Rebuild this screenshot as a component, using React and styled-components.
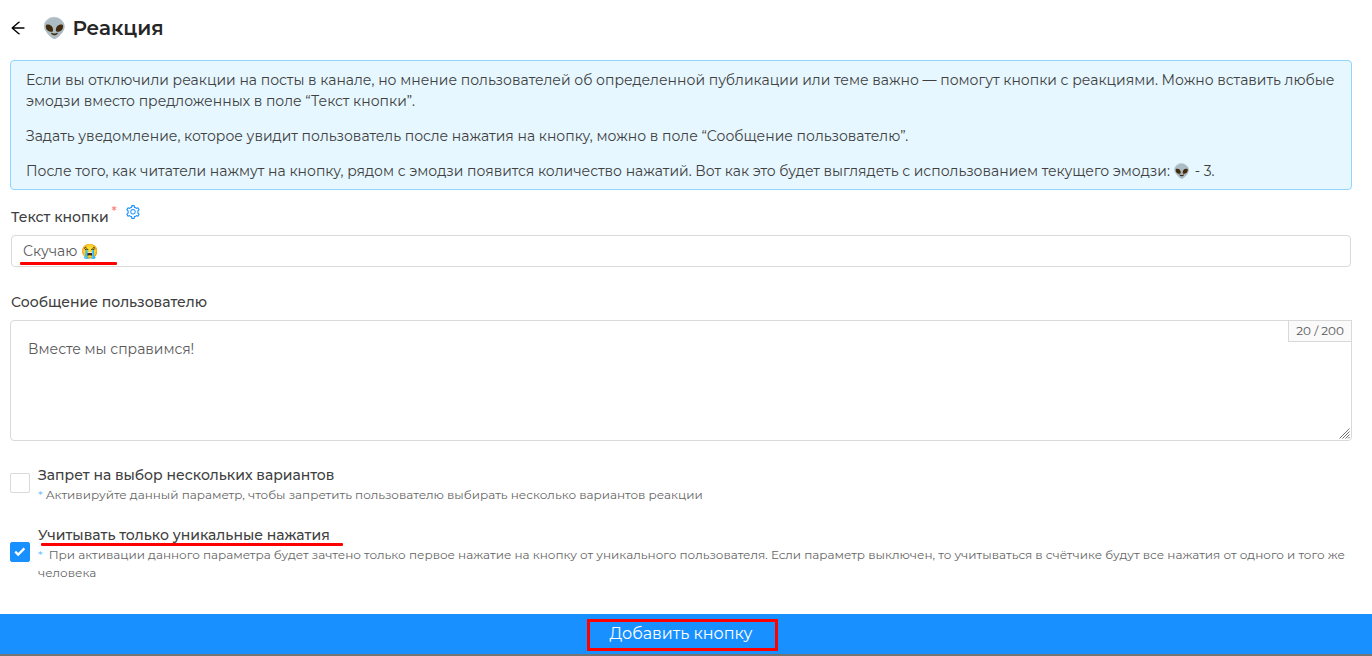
import React, { useState } from "react";
import styled, { createGlobalStyle } from "styled-components";
import { AiOutlineArrowLeft, AiOutlineSetting } from "react-icons/ai";

const GlobalStyle = createGlobalStyle`
  *, *::before, *::after { box-sizing: border-box; }
  body {
    margin: 0;
    background: #fff;
    color: #404040;
    font-family: Montserrat, Inter, "Noto Color Emoji", sans-serif;
    font-size: 14px;
    line-height: 21px;
  }
`;

const Page = styled.form`
  display: flex;
  flex-direction: column;
  min-height: 100vh;
`;

const Content = styled.main`
  flex: 1;
  padding: 14px 20px 0 10px;
`;

const Header = styled.header`
  display: flex;
  align-items: center;
  gap: 15px;
  height: 28px;
  margin-left: -1px;
`;

const IconButton = styled.button`
  display: flex;
  align-self: ${(p) => p.$align};
  padding: 0;
  border: 0;
  background: none;
  color: ${(p) => p.$color};
  font-size: ${(p) => p.$size};
  cursor: pointer;
`;

const Title = styled.h1`
  margin: 0;
  color: #262626;
  font-size: 20px;
  font-weight: 600;
  line-height: 28px;
`;

const Notice = styled.section`
  display: flex;
  flex-direction: column;
  gap: 14px;
  margin-top: 18px;
  padding: 9px 15px 7px;
  border: 1px solid #91d5ff;
  border-radius: 4px;
  background: #e6f7ff;
`;

const Paragraph = styled.p`
  margin: 0;
`;

const LabelRow = styled.div`
  display: flex;
  align-items: flex-end;
  gap: 9px;
  height: 24px;
  margin: ${(p) => p.$top} 0 7px;
  padding-left: 1px;
`;

const Label = styled.label`
  font-weight: 500;
`;

const Required = styled.sup`
  margin-left: 3px;
  color: #ff7875;
  font-size: 12px;
  line-height: 0;
`;

const Field = styled.div`
  position: relative;
  margin: 0 ${(p) => p.$inset};
`;

const TextInput = styled.input`
  display: block;
  width: 100%;
  height: 32px;
  padding: 4px 11px;
  border: 1px solid #d9d9d9;
  border-radius: 4px;
  color: #595959;
  font: inherit;
`;

const TextArea = styled.textarea`
  display: block;
  width: 100%;
  height: 121px;
  padding: 18px 17px;
  border: 1px solid #d9d9d9;
  border-radius: 4px;
  color: #595959;
  font: inherit;
  resize: vertical;

  &::-webkit-resizer { background: transparent; }
`;

const Grip = styled.svg`
  position: absolute;
  right: 2px;
  bottom: 2px;
  pointer-events: none;
`;

const Counter = styled.span`
  position: absolute;
  top: 0;
  right: 0;
  padding: 0 7px;
  border: 1px solid #d9d9d9;
  background: #fafafa;
  color: #595959;
  font-size: 12px;
  line-height: 20px;
`;

const Options = styled.div`
  display: flex;
  flex-direction: column;
  gap: 21px;
  margin-top: 24px;
`;

const Option = styled.div`
  display: flex;
  align-items: center;
  gap: 8px;
`;

const CheckWrap = styled.span`
  display: grid;
  flex: none;
  width: 20px;
  height: 20px;
  margin-bottom: 3px;

  > * { grid-area: 1 / 1; }
  svg { place-self: center; pointer-events: none; }
`;

const CheckBox = styled.input`
  appearance: none;
  width: 20px;
  height: 20px;
  margin: 0;
  border: 1px solid #d9d9d9;
  border-radius: 2px;
  background: #fff;

  &:checked {
    border-color: #1890ff;
    background: #1890ff;
  }
`;

const Hint = styled.p`
  margin: 0;
  color: #666;
  font-size: 12px;
  line-height: 18px;
`;

const HintStar = styled.span`
  margin-right: ${(p) => p.$gap};
  color: #69c0ff;
`;

const Submit = styled.button`
  height: 40px;
  padding: 0 10px 2px 0;
  border: 0;
  background: #1890ff;
  color: #fff;
  font: inherit;
  font-size: 16px;
  cursor: pointer;
`;

const BottomEdge = styled.div`
  height: 2px;
  background: #757575;
`;

const Marked = styled.span`
  position: relative;
`;

const Underline = styled.span`
  position: absolute;
  left: ${(p) => p.$left};
  bottom: ${(p) => p.$bottom};
  width: ${(p) => p.$width};
  height: 3px;
  border-radius: 1px;
  background: #f00;
  pointer-events: none;
`;

const Frame = styled.span`
  position: absolute;
  inset: -5px -26px -8px -23px;
  border: 3px solid #f00;
  pointer-events: none;
`;

function Toggle({ id, title, gap, hint, defaultChecked, mark }) {
  const [on, setOn] = useState(defaultChecked);
  return (
    <Option>
      <CheckWrap>
        <CheckBox
          id={id}
          type="checkbox"
          checked={on}
          aria-describedby={id + "-hint"}
          onChange={(e) => setOn(e.target.checked)}
        />
        {on && (
          <svg width="12" height="10" viewBox="0 0 12 10" fill="none" stroke="#fff" strokeWidth="2.2">
            <path d="M1.2 4.6 4.2 7.6 10.4 1.4" />
          </svg>
        )}
      </CheckWrap>
      <div>
        <Marked>
          <Label htmlFor={id}>{title}</Label>
          {mark}
        </Marked>
        <Hint id={id + "-hint"}>
          <HintStar $gap={gap}>*</HintStar>
          {hint}
        </Hint>
      </div>
    </Option>
  );
}

export default function App() {
  const [text, setText] = useState("Скучаю 😭");
  const [message, setMessage] = useState("Вместе мы справимся!");
  return (
    <>
      <GlobalStyle />
      <Page onSubmit={(e) => e.preventDefault()}>
        <Content>
          <Header>
            <IconButton type="button" aria-label="Назад" $align="center" $color="#000" $size="18px">
              <AiOutlineArrowLeft />
            </IconButton>
            <Title>👽 Реакция</Title>
          </Header>
          <Notice>
            <Paragraph>
              Если вы отключили реакции на посты в канале, но мнение пользователей об определенной
              публикации или теме важно — помогут кнопки с реакциями. Можно вставить любые эмодзи
              вместо предложенных в поле “Текст кнопки”.
            </Paragraph>
            <Paragraph>
              Задать уведомление, которое увидит пользователь после нажатия на кнопку, можно в поле
              “Сообщение пользователю”.
            </Paragraph>
            <Paragraph>
              После того, как читатели нажмут на кнопку, рядом с эмодзи появится количество нажатий.
              Вот как это будет выглядеть с использованием текущего эмодзи: 👽 - 3.
            </Paragraph>
          </Notice>
          <LabelRow $top="14px">
            <Label htmlFor="button-text">
              Текст кнопки<Required>*</Required>
            </Label>
            <IconButton type="button" aria-label="Настройки" $align="flex-start" $color="#1890ff" $size="16px">
              <AiOutlineSetting />
            </IconButton>
          </LabelRow>
          <Field $inset="1px">
            <TextInput id="button-text" value={text} onChange={(e) => setText(e.target.value)} />
            <Underline $left="9px" $bottom="2px" $width="97px" />
          </Field>
          <LabelRow $top="22px">
            <Label htmlFor="user-message">Сообщение пользователю</Label>
          </LabelRow>
          <Field $inset="0">
            <TextArea
              id="user-message"
              maxLength={200}
              value={message}
              onChange={(e) => setMessage(e.target.value)}
            />
            <Counter>{message.length} / 200</Counter>
            <Grip width="11" height="11" viewBox="0 0 11 11" stroke="#707070" strokeWidth="1" aria-hidden="true">
              <path d="M0.5 10.5 10.5 0.5M3.5 10.5 10.5 3.5M6.5 10.5 10.5 6.5M9 10.5 10.5 9" />
            </Grip>
          </Field>
          <Options>
            <Toggle
              id="single-choice"
              title="Запрет на выбор нескольких вариантов"
              gap="3px"
              hint="Активируйте данный параметр, чтобы запретить пользователю выбирать несколько вариантов реакции"
              defaultChecked={false}
            />
            <Toggle
              id="unique-clicks"
              title="Учитывать только уникальные нажатия"
              gap="6px"
              hint="При активации данного параметра будет зачтено только первое нажатие на кнопку от уникального пользователя. Если параметр выключен, то учитываться в счётчике будут все нажатия от одного и того же человека"
              defaultChecked
              mark={<Underline $left="3px" $bottom="-2px" $width="302px" />}
            />
          </Options>
        </Content>
        <Submit type="submit">
          <Marked>
            Добавить кнопку
            <Frame />
          </Marked>
        </Submit>
        <BottomEdge />
      </Page>
    </>
  );
}
